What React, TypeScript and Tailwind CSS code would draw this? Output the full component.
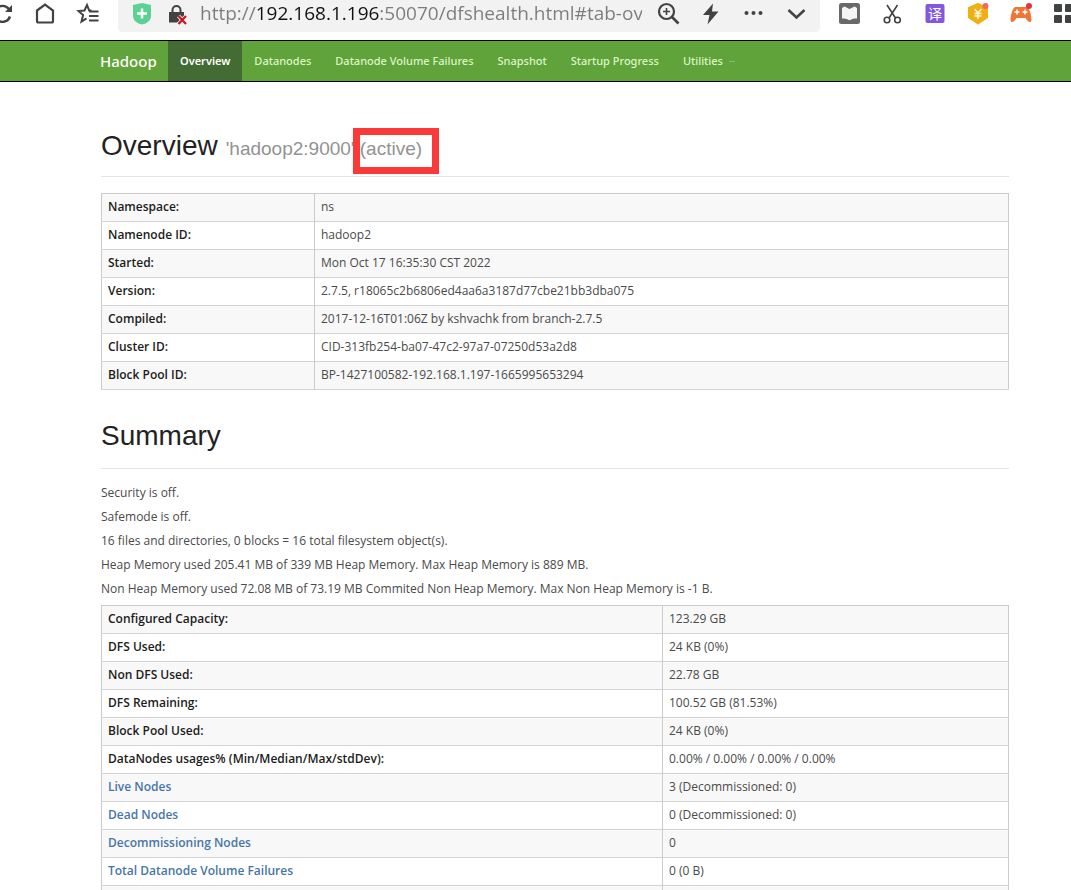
import React from "react";

interface IRow {
	label: string;
	value: string;
	link?: boolean;
}

const overviewRows: IRow[] = [
	{ label: "Namespace:", value: "ns" },
	{ label: "Namenode ID:", value: "hadoop2" },
	{ label: "Started:", value: "Mon Oct 17 16:35:30 CST 2022" },
	{ label: "Version:", value: "2.7.5, r18065c2b6806ed4aa6a3187d77cbe21bb3dba075" },
	{ label: "Compiled:", value: "2017-12-16T01:06Z by kshvachk from branch-2.7.5" },
	{ label: "Cluster ID:", value: "CID-313fb254-ba07-47c2-97a7-07250d53a2d8" },
	{ label: "Block Pool ID:", value: "BP-1427100582-192.168.1.197-1665995653294" },
];

const summaryLines = [
	"Security is off.",
	"Safemode is off.",
	"16 files and directories, 0 blocks = 16 total filesystem object(s).",
	"Heap Memory used 205.41 MB of 339 MB Heap Memory. Max Heap Memory is 889 MB.",
	"Non Heap Memory used 72.08 MB of 73.19 MB Commited Non Heap Memory. Max Non Heap Memory is -1 B.",
];

const summaryRows: IRow[] = [
	{ label: "Configured Capacity:", value: "123.29 GB" },
	{ label: "DFS Used:", value: "24 KB (0%)" },
	{ label: "Non DFS Used:", value: "22.78 GB" },
	{ label: "DFS Remaining:", value: "100.52 GB (81.53%)" },
	{ label: "Block Pool Used:", value: "24 KB (0%)" },
	{ label: "DataNodes usages% (Min/Median/Max/stdDev):", value: "0.00% / 0.00% / 0.00% / 0.00%" },
	{ label: "Live Nodes", value: "3 (Decommissioned: 0)", link: true },
	{ label: "Dead Nodes", value: "0 (Decommissioned: 0)", link: true },
	{ label: "Decommissioning Nodes", value: "0", link: true },
	{ label: "Total Datanode Volume Failures", value: "0 (0 B)", link: true },
	{ label: "", value: "" },
];

const navItems = [
	"Datanodes",
	"Datanode Volume Failures",
	"Snapshot",
	"Startup Progress",
	"Utilities",
];

interface IIconButtonProps {
	label: string;
	className?: string;
	children: React.ReactNode;
}

function IconButton({ label, className = "w-[43px]", children }: IIconButtonProps) {
	return (
		<button
			type="button"
			aria-label={label}
			className={`flex shrink-0 items-center justify-center ${className}`}
		>
			<svg
				width="24"
				height="24"
				viewBox="0 0 24 24"
				fill="none"
				stroke="#404244"
				strokeWidth="2"
			>
				{children}
			</svg>
		</button>
	);
}

function BrowserBar() {
	return (
		<div className="flex h-10 items-start overflow-hidden bg-white">
			<div className="-ml-5 flex h-[26px] shrink-0">
				<IconButton label="Reload">
					<path d="M18.8 8A8 8 0 1 0 20 15.5" strokeWidth="2.4" />
					<path d="M22 4v7h-7z" fill="#404244" stroke="none" />
				</IconButton>
				<IconButton label="Home">
					<path
						d="M4 9.500 12 3.500l8 6v10.500a1.500 1.500 0 0 1-1.500 1.500h-13A1.500 1.500 0 0 1 4 20z"
						strokeWidth="2.200"
					/>
				</IconButton>
				<IconButton label="Bookmarks">
					<path d="M15.500 9.500 13.200 9.500 11 4 8.500 9.500 2.500 10l4.600 4-1.600 6.500 5-3.200" />
					<path d="M13 10.500h9.500M13 15h9.500M13 19.500h9.500" strokeWidth="2.200" />
				</IconButton>
			</div>

			{/* ADDRESS */}
			<div className="ml-[9px] flex h-8 min-w-0 flex-1 items-start rounded-b bg-[#f2f2f3] pr-0.5 pl-1.5">
				<div className="flex h-[26px] shrink-0">
					<IconButton label="Site safety" className="w-9">
						<path
							d="M3 4 12 2l9 2v11c0 4.500-4 7.500-9 8.500-5-1-9-4-9-8.500z"
							fill="#5ad392"
							stroke="none"
						/>
						<path d="M12 7.500v10M7 12.500h10" stroke="#fff" strokeWidth="2.500" />
					</IconButton>
					<IconButton label="Connection not secure" className="w-9">
						<path d="M6.500 12V9a4 4 0 0 1 8 0v3" />
						<path d="M3 11h15v10.500H3z" fill="#404244" stroke="none" />
						<path d="m12.500 15 7.500 8M20 15l-7.500 8" stroke="#f2f2f3" strokeWidth="4" />
						<path d="m12.500 15 7.500 8M20 15l-7.500 8" stroke="#c7161d" strokeWidth="2.200" />
					</IconButton>
				</div>
				<input
					type="text"
					aria-label="Address"
					readOnly
					value="http://192.168.1.196:50070/dfshealth.html#tab-overview"
					className="mr-1 ml-1 h-[27px] min-w-0 flex-1 bg-[linear-gradient(90deg,#7c7c7c_56px,#111_56px,#111_179px,#7c7c7c_179px)] bg-clip-text font-['Open_Sans',sans-serif] text-[19px] text-transparent outline-none"
				/>
				<div className="flex h-[26px] shrink-0">
					<IconButton label="Zoom">
						<circle cx="10.500" cy="10.500" r="7.500" strokeWidth="2.200" />
						<path d="m16 16 6.500 6.500" strokeWidth="2.600" />
						<path d="M7 10.500h7M10.500 7v7" strokeWidth="1.600" />
					</IconButton>
					<IconButton label="Quick actions">
						<path d="M14 2.500 4 14h6.500L8.500 23.500l11-13H13z" fill="#404244" stroke="none" />
					</IconButton>
					<IconButton label="More">
						<g fill="#404244" stroke="none">
							<circle cx="4.500" cy="12" r="2" />
							<circle cx="11.500" cy="12" r="2" />
							<circle cx="18.500" cy="12" r="2" />
						</g>
					</IconButton>
					<IconButton label="Expand">
						<path d="m3.500 9 8 7.500 8-7.500" strokeWidth="2.500" />
					</IconButton>
				</div>
			</div>

			{/* EXTENSIONS */}
			<div className="-mr-3.5 ml-[7px] flex h-[26px] shrink-0">
				<IconButton label="Reader">
					<rect x="2" y="2" width="21" height="21" rx="2.500" fill="#67696a" stroke="none" />
					<path
						d="M5 7 7.500 5.500 12.500 8 17.500 5.500 20 7v10.500c-3 0-5 .3-7.500 1.800C10 17.800 8 17.500 5 17.500z"
						fill="#f4f4f4"
						stroke="none"
					/>
				</IconButton>
				<IconButton label="Screenshot">
					<g strokeWidth="1.600">
						<path d="M7 4 15.500 17M17.500 4 9 17" />
						<circle cx="7" cy="19" r="2.800" />
						<circle cx="17.500" cy="19" r="2.800" />
					</g>
				</IconButton>
				<IconButton label="Translate">
					<rect x="2.500" y="3" width="19" height="19" rx="2" fill="#8258df" stroke="none" />
					<text
						x="12"
						y="17.500"
						fontSize="14"
						fill="#fff"
						stroke="none"
						textAnchor="middle"
						className="font-['Noto_Sans_CJK_SC',sans-serif]"
					>
						译
					</text>
				</IconButton>
				<IconButton label="Coupons">
					<path
						d="M12 3 21 7v9.500L12 22.500 3 16.500V7z"
						fill="#f0b014"
						stroke="#f0b014"
						strokeLinejoin="round"
					/>
					<path
						d="m8.500 8 3.500 4 3.500-4M12 12v6M8.500 12.500h7M8.500 15h7"
						stroke="#fff7dc"
						strokeWidth="1.500"
					/>
					<circle cx="19.500" cy="5" r="3" fill="#ec6a62" stroke="none" />
				</IconButton>
				<IconButton label="Games">
					<path
						d="M6 6h12c2.200 1 4.500 8 4.500 13-.5 3.500-3.500 2.500-6-2h-9c-2.500 4.500-5.500 5.500-6 2C1.500 14 3.800 7 6 6z"
						fill="#ee7636"
						stroke="none"
					/>
					<path d="M8 8.500v5M5.500 11h5M16 8.500v5M13.500 11h5" stroke="#fff" strokeWidth="1.500" />
					<circle cx="20" cy="5" r="3" fill="#e53343" stroke="none" />
				</IconButton>
				<IconButton label="Extensions">
					<g fill="#404244" stroke="none">
						<rect x="2" y="3" width="8" height="8" rx="1" />
						<rect x="13" y="3" width="8" height="8" rx="1" />
						<rect x="2" y="14" width="8" height="8" rx="1" />
						<rect x="13" y="14" width="8" height="8" rx="1" />
					</g>
				</IconButton>
			</div>
		</div>
	);
}

function NavBar() {
	return (
		<nav className="flex h-[42px] border-y border-black bg-[#5fa33a] pl-[100px] text-[11px] font-medium whitespace-nowrap text-[#dcf5c6]">
			<a href="#top" className="flex w-[68px] items-center text-[15px] text-white">
				Hadoop
			</a>
			<a
				href="#tab-overview"
				className="flex items-center bg-[#446b33] px-3 font-semibold text-white"
			>
				Overview
			</a>
			{navItems.map((item) => (
				<a key={item} href="#tab" className="flex items-center gap-1.5 px-3">
					{item}
					{item === "Utilities" && <span className="h-px w-1.5 bg-[#84bd66]" />}
				</a>
			))}
		</nav>
	);
}

function DataTable({ rows, labelWidth }: { rows: IRow[]; labelWidth: string }) {
	return (
		<table className="w-full table-fixed border-collapse border border-[#cbcbcb] text-xs">
			<tbody>
				{rows.map((row) => (
					<tr key={row.label} className="h-7 border-b border-[#d4d4d4] odd:bg-[#f8f8f8]">
						<th
							scope="row"
							className={`border-r border-[#cbcbcb] px-1.5 pb-0.5 text-left font-semibold text-[#1c1c1c] ${labelWidth}`}
						>
							{row.link ? (
								<a href="#tab-datanode" className="text-[#4676a8]">
									{row.label}
								</a>
							) : (
								row.label
							)}
						</th>
						<td className="px-1.5 pb-0.5">{row.value}</td>
					</tr>
				))}
			</tbody>
		</table>
	);
}

export default function App() {
	return (
		<div className="h-screen overflow-hidden bg-white font-['Noto_Sans',sans-serif] text-[#4a4a4a]">
			<BrowserBar />
			<NavBar />

			<main className="pt-[42px] pr-[62px] pl-[101px] font-['Open_Sans',sans-serif]">
				{/* OVERVIEW */}
				<h1 className="flex h-[53px] items-baseline border-b border-[#e2e2e2] pt-1 font-['Liberation_Sans',sans-serif] text-[28px] leading-9 text-[#222]">
					Overview
					<small className="ml-2 text-[19px] text-[#929292]">
						'hadoop2:9000'{" "}
						<span className="relative">
							(active)
							<span className="absolute -top-2.5 -right-[17px] -bottom-[15px] -left-[7px] border-[7px] border-[#fa3939]" />
						</span>
					</small>
				</h1>
				<div className="pt-4">
					<DataTable rows={overviewRows} labelWidth="w-[213px]" />
				</div>

				{/* SUMMARY */}
				<h1 className="mt-6 h-[55px] border-b border-[#e2e2e2] pt-1 font-['Liberation_Sans',sans-serif] text-[28px] leading-9 text-[#222]">
					Summary
				</h1>
				<div className="pt-3 pb-1 text-xs leading-6">
					{summaryLines.map((line) => (
						<p key={line}>{line}</p>
					))}
				</div>
				<DataTable rows={summaryRows} labelWidth="w-[561px]" />
			</main>
		</div>
	);
}
